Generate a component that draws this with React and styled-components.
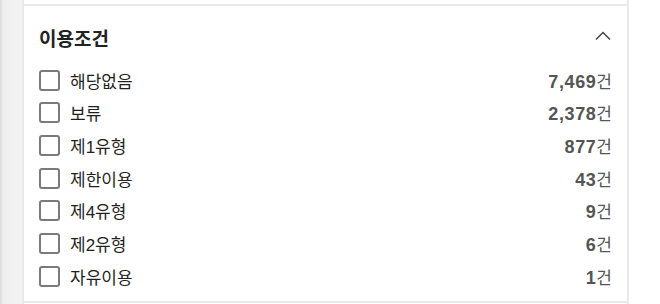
import styled, { createGlobalStyle } from "styled-components";

const Global = createGlobalStyle`
  html, body {
    margin: 0;
    padding: 0;
    background: #ffffff;
  }
  body {
    font-family: "Liberation Sans", "Noto Sans CJK KR", sans-serif;
  }
`;

const opciones = [
  { nombre: "해당없음", total: "7,469" },
  { nombre: "보류", total: "2,378" },
  { nombre: "제1유형", total: "877" },
  { nombre: "제한이용", total: "43" },
  { nombre: "제4유형", total: "9" },
  { nombre: "제2유형", total: "6" },
  { nombre: "자유이용", total: "1" },
];

function App() {
  return (
    <>
      <Global />
      <Pagina>
        <Lateral />
        <Columna>
          <Seccion>
            <Cabecera>
              <Titulo>이용조건</Titulo>
              <Flecha width="16" height="10" viewBox="0 0 16 10">
                <path d="M1 8.5 L8 1.5 L15 8.5" />
              </Flecha>
            </Cabecera>
            <Lista>
              {opciones.map((op) => (
                <Fila key={op.nombre}>
                  <Etiqueta>
                    <Casilla />
                    <Nombre>{op.nombre}</Nombre>
                  </Etiqueta>
                  <Total>
                    {op.total}
                    <Unidad>건</Unidad>
                  </Total>
                </Fila>
              ))}
            </Lista>
          </Seccion>
        </Columna>
        <Fondo />
      </Pagina>
    </>
  );
}

const Pagina = styled.div`
  display: flex;
  width: 660px;
  height: 304px;
  overflow: hidden;
`;

const Lateral = styled.div`
  width: 22px;
  flex-shrink: 0;
  background: linear-gradient(to right, #d9d9d9 0, #eeeeee 3px, #f3f3f3 100%);
`;

const Columna = styled.div`
  width: 603px;
  flex-shrink: 0;
  border-left: 2px solid #e9e9e9;
  border-right: 2px solid #e9e9e9;
  padding-top: 4px;
`;

const Fondo = styled.div`
  flex: 1;
  background: #ffffff;
`;

const Seccion = styled.div`
  border-top: 2px solid #e9e9e9;
  border-bottom: 2px solid #e9e9e9;
  height: 299px;
  box-sizing: border-box;
  padding: 11px 15px 0 15px;
`;

const Cabecera = styled.div`
  display: flex;
  align-items: center;
  justify-content: space-between;
  height: 40px;
`;

const Titulo = styled.h3`
  margin: 0;
  font-family: "Noto Sans CJK KR", sans-serif;
  font-size: 19px;
  font-weight: 700;
  color: #222222;
`;

const Flecha = styled.svg`
  fill: none;
  stroke: #444444;
  stroke-width: 1.5;
  margin-right: 1px;
  margin-top: -2px;
`;

const Lista = styled.ul`
  list-style: none;
  margin: 7px 0 0 0;
  padding: 0;
`;

const Fila = styled.li`
  display: flex;
  align-items: center;
  justify-content: space-between;
  height: 32.67px;
`;

const Etiqueta = styled.label`
  display: flex;
  align-items: center;
  gap: 10px;
`;

const Casilla = styled.span`
  width: 21px;
  height: 21px;
  box-sizing: border-box;
  border: 2px solid #7a7a7a;
  border-radius: 3px;
  background: #ffffff;
`;

const Nombre = styled.span`
  font-size: 17px;
  color: #1f1f1f;
`;

const Total = styled.span`
  font-size: 18px;
  font-weight: 700;
  letter-spacing: 0.6px;
  color: #555555;
`;

const Unidad = styled.span`
  font-family: "Noto Sans CJK KR", sans-serif;
  font-size: 17px;
  font-weight: 400;
  letter-spacing: 0;
`;

export default App;
